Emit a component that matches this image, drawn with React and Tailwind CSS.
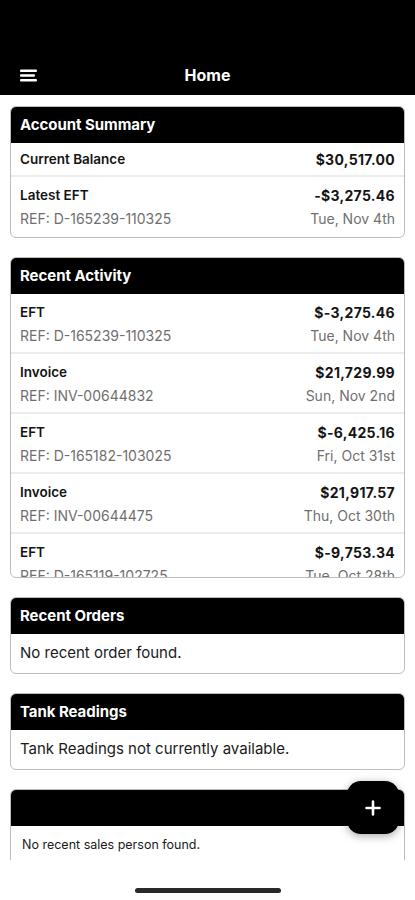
import React from "react";

const font = { fontFamily: "Inter, 'Noto Sans', sans-serif" };

function Card({ title, children, className = "" }) {
  return (
    <div className={"shrink-0 border border-[#bcbcbc] rounded-[6px] overflow-hidden bg-white " + className}>
      <div className="h-[36px] bg-black px-[9px] flex items-center text-white font-bold text-[15px] tracking-[-0.05px]">
        {title}
      </div>
      {children}
    </div>
  );
}

function TxRow({ label, amount, ref_, date, last }) {
  return (
    <div className={"h-[60px] px-[9px] pt-[7px] flex justify-between text-[14px] leading-[23px] " + (last ? "" : "border-b-2 border-[#ececec]")}>
      <div className="flex flex-col">
        <span className="font-semibold text-[13.5px] text-[#141414]">{label}</span>
        <span className="text-[#6f6f6f]">{ref_}</span>
      </div>
      <div className="flex flex-col items-end">
        <span className="font-bold tracking-[0.3px] text-[#141414]">{amount}</span>
        <span className="text-[#6f6f6f]">{date}</span>
      </div>
    </div>
  );
}

export default function App() {
  const activity = [
    { label: "EFT", amount: "$-3,275.46", ref_: "REF: D-165239-110325", date: "Tue, Nov 4th" },
    { label: "Invoice", amount: "$21,729.99", ref_: "REF: INV-00644832", date: "Sun, Nov 2nd" },
    { label: "EFT", amount: "$-6,425.16", ref_: "REF: D-165182-103025", date: "Fri, Oct 31st" },
    { label: "Invoice", amount: "$21,917.57", ref_: "REF: INV-00644475", date: "Thu, Oct 30th" },
    { label: "EFT", amount: "$-9,753.34", ref_: "REF: D-165119-102725", date: "Tue, Oct 28th" },
  ];
  return (
    <div className="relative w-full h-[900px] bg-white flex flex-col overflow-hidden" style={font}>
      <div className="h-[95px] bg-black shrink-0 flex flex-col justify-end">
        <div className="relative h-[40px] flex items-center justify-center">
          <svg className="absolute left-[19px] top-[14px]" width="19" height="13" viewBox="0 0 19 13">
            <rect x="1" y="0.5" width="17" height="2.4" rx="1" fill="white" />
            <rect x="1" y="5.3" width="15" height="2.4" rx="1" fill="white" />
            <rect x="1" y="10.1" width="17" height="2.4" rx="1" fill="white" />
          </svg>
          <span className="text-white font-bold text-[16px]">Home</span>
        </div>
      </div>

      <div className="flex-1 overflow-hidden px-[10px] pt-[11px] flex flex-col gap-[19px]">
        <Card title="Account Summary">
          <div className="h-[34px] px-[9px] flex items-center justify-between text-[14px] border-b-2 border-[#ececec]">
            <span className="font-semibold text-[13.5px] text-[#141414]">Current Balance</span>
            <span className="font-bold tracking-[0.3px] text-[#141414]">$30,517.00</span>
          </div>
          <TxRow label="Latest EFT" amount="-$3,275.46" ref_="REF: D-165239-110325" date="Tue, Nov 4th" last />
        </Card>

        <Card title="Recent Activity">
          <div className="h-[283px] overflow-hidden">
            {activity.map((a, i) => (
              <TxRow key={i} {...a} last={i === activity.length - 1} />
            ))}
          </div>
        </Card>

        <Card title="Recent Orders">
          <div className="h-[39px] px-[9px] flex items-center text-[15px] text-[#1a1a1a]">
            No recent order found.
          </div>
        </Card>

        <Card title="Tank Readings">
          <div className="h-[39px] px-[9px] flex items-center text-[15px] text-[#1a1a1a]">
            Tank Readings not currently available.
          </div>
        </Card>

        <Card title="">
          <div className="h-[50px] px-[11px] pt-[10px] text-[12.5px] leading-[18px] text-[#1a1a1a]">
            No recent sales person found.
          </div>
        </Card>
      </div>

      <div className="h-[40px] shrink-0 bg-white flex justify-center">
        <div className="mt-[28px] w-[146px] h-[5px] rounded-full bg-[#2a2a2a]" />
      </div>

      <button className="absolute left-[347px] top-[781px] w-[52px] h-[53px] rounded-[14px] bg-black flex items-center justify-center shadow-[0_2px_8px_rgba(0,0,0,0.35)]">
        <svg width="16" height="16" viewBox="0 0 16 16">
          <path d="M8 1.5v13M1.5 8h13" stroke="white" strokeWidth="2.6" strokeLinecap="round" />
        </svg>
      </button>
    </div>
  );
}
